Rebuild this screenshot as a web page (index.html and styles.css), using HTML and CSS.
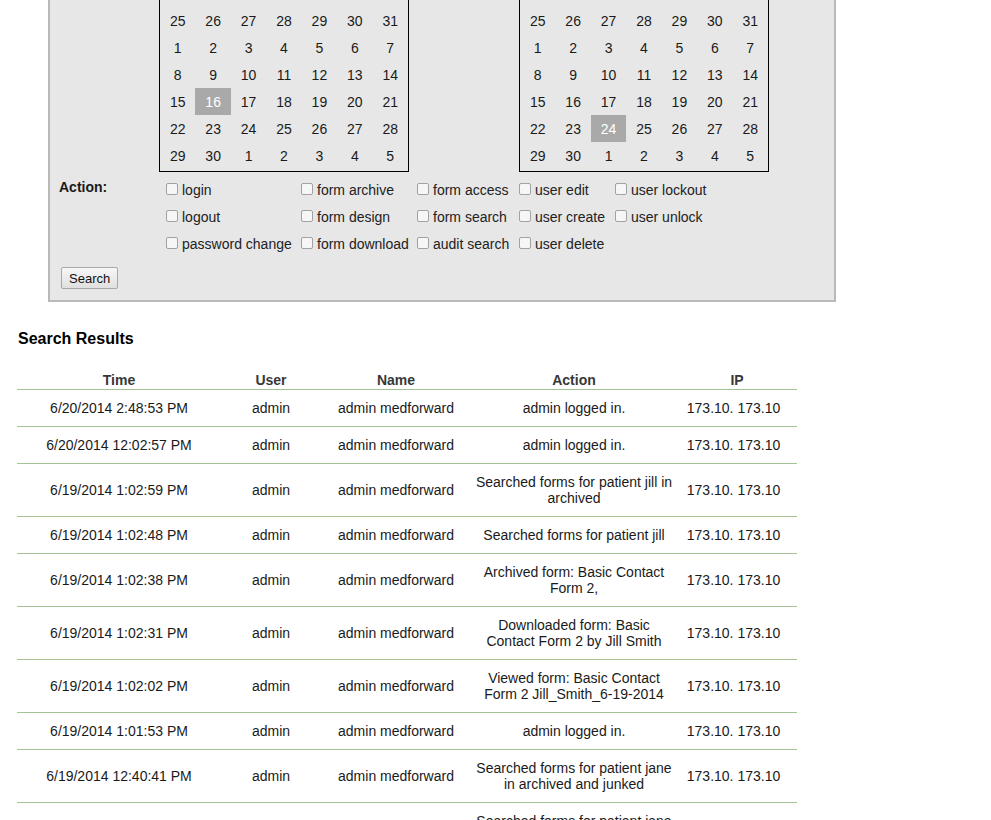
FILE: index.html
```html
<!DOCTYPE html>
<html lang="en">
<head>
    <meta charset="UTF-8">
    <meta name="viewport" content="width=device-width, initial-scale=1.0">
    <title>Audit Search</title>
    <link rel="stylesheet" href="styles.css">
</head>
<body>
<div class="page">
    <div class="filter-panel">
        <div class="date-row">
            <div class="field-label">Date:</div>
            <table class="cal">
                <tr class="cal-title"><td>&lt;</td><td colspan="5">June 2014</td><td>&gt;</td></tr>
                <tr class="cal-days"><td>Su</td><td>Mo</td><td>Tu</td><td>We</td><td>Th</td><td>Fr</td><td>Sa</td></tr>
                <tr><td>25</td><td>26</td><td>27</td><td>28</td><td>29</td><td>30</td><td>31</td></tr>
                <tr><td>1</td><td>2</td><td>3</td><td>4</td><td>5</td><td>6</td><td>7</td></tr>
                <tr><td>8</td><td>9</td><td>10</td><td>11</td><td>12</td><td>13</td><td>14</td></tr>
                <tr><td>15</td><td class="selected">16</td><td>17</td><td>18</td><td>19</td><td>20</td><td>21</td></tr>
                <tr><td>22</td><td>23</td><td>24</td><td>25</td><td>26</td><td>27</td><td>28</td></tr>
                <tr><td>29</td><td>30</td><td>1</td><td>2</td><td>3</td><td>4</td><td>5</td></tr>
            </table>
            <div class="to-label">To:</div>
            <table class="cal">
                <tr class="cal-title"><td>&lt;</td><td colspan="5">June 2014</td><td>&gt;</td></tr>
                <tr class="cal-days"><td>Su</td><td>Mo</td><td>Tu</td><td>We</td><td>Th</td><td>Fr</td><td>Sa</td></tr>
                <tr><td>25</td><td>26</td><td>27</td><td>28</td><td>29</td><td>30</td><td>31</td></tr>
                <tr><td>1</td><td>2</td><td>3</td><td>4</td><td>5</td><td>6</td><td>7</td></tr>
                <tr><td>8</td><td>9</td><td>10</td><td>11</td><td>12</td><td>13</td><td>14</td></tr>
                <tr><td>15</td><td>16</td><td>17</td><td>18</td><td>19</td><td>20</td><td>21</td></tr>
                <tr><td>22</td><td>23</td><td class="selected">24</td><td>25</td><td>26</td><td>27</td><td>28</td></tr>
                <tr><td>29</td><td>30</td><td>1</td><td>2</td><td>3</td><td>4</td><td>5</td></tr>
            </table>
        </div>
        <div class="action-row">
            <div class="field-label action-label">Action:</div>
            <div class="action-grid">
                <label class="opt"><input type="checkbox">login</label>
                <label class="opt"><input type="checkbox">form archive</label>
                <label class="opt"><input type="checkbox">form access</label>
                <label class="opt"><input type="checkbox">user edit</label>
                <label class="opt"><input type="checkbox">user lockout</label>
                <label class="opt"><input type="checkbox">logout</label>
                <label class="opt"><input type="checkbox">form design</label>
                <label class="opt"><input type="checkbox">form search</label>
                <label class="opt"><input type="checkbox">user create</label>
                <label class="opt"><input type="checkbox">user unlock</label>
                <label class="opt"><input type="checkbox">password change</label>
                <label class="opt"><input type="checkbox">form download</label>
                <label class="opt"><input type="checkbox">audit search</label>
                <label class="opt"><input type="checkbox">user delete</label>
            </div>
        </div>
        <button class="search-btn">Search</button>
    </div>

    <h3 class="results-title">Search Results</h3>
    <table class="results">
        <colgroup>
            <col class="c-time"><col class="c-user"><col class="c-name"><col class="c-action"><col class="c-ip">
        </colgroup>
        <tr><th>Time</th><th>User</th><th>Name</th><th>Action</th><th>IP</th></tr>
        <tr><td>6/20/2014 2:48:53 PM</td><td>admin</td><td>admin medforward</td><td>admin logged in.</td><td class="ip">173.10. 173.10</td></tr>
        <tr><td>6/20/2014 12:02:57 PM</td><td>admin</td><td>admin medforward</td><td>admin logged in.</td><td class="ip">173.10. 173.10</td></tr>
        <tr><td>6/19/2014 1:02:59 PM</td><td>admin</td><td>admin medforward</td><td>Searched forms for patient jill in archived</td><td class="ip">173.10. 173.10</td></tr>
        <tr><td>6/19/2014 1:02:48 PM</td><td>admin</td><td>admin medforward</td><td>Searched forms for patient jill</td><td class="ip">173.10. 173.10</td></tr>
        <tr><td>6/19/2014 1:02:38 PM</td><td>admin</td><td>admin medforward</td><td>Archived form: Basic Contact Form 2,</td><td class="ip">173.10. 173.10</td></tr>
        <tr><td>6/19/2014 1:02:31 PM</td><td>admin</td><td>admin medforward</td><td>Downloaded form: Basic Contact Form 2 by Jill Smith</td><td class="ip">173.10. 173.10</td></tr>
        <tr><td>6/19/2014 1:02:02 PM</td><td>admin</td><td>admin medforward</td><td>Viewed form: Basic Contact Form 2 Jill_Smith_6-19-2014</td><td class="ip">173.10. 173.10</td></tr>
        <tr><td>6/19/2014 1:01:53 PM</td><td>admin</td><td>admin medforward</td><td>admin logged in.</td><td class="ip">173.10. 173.10</td></tr>
        <tr><td>6/19/2014 12:40:41 PM</td><td>admin</td><td>admin medforward</td><td>Searched forms for patient jane in archived and junked</td><td class="ip">173.10. 173.10</td></tr>
        <tr><td>6/19/2014 12:40:30 PM</td><td>admin</td><td>admin medforward</td><td>Searched forms for patient jane in archived</td><td class="ip">173.10. 173.10</td></tr>
        <tr><td>6/19/2014 12:40:12 PM</td><td>admin</td><td>admin medforward</td><td>admin logged in.</td><td class="ip">173.10. 173.10</td></tr>
    </table>
</div>
</body>
</html>
```

FILE: styles.css
```css
body {
    font-family: "Liberation Sans", Arial, sans-serif;
    font-size: 14px;
    color: #1a1a1a;
    margin: 0;
    padding: 0;
    background: #fff;
}
.page {
    padding-left: 17px;
}
.filter-panel {
    box-sizing: border-box;
    width: 788px;
    margin: -60px 0 0 31px;
    padding: 10px 9px 11px 9px;
    background: #e7e7e7;
    border: 2px solid #b9b9b9;
}
.date-row {
    display: flex;
    align-items: flex-start;
}
.field-label {
    width: 100px;
    flex-shrink: 0;
    font-weight: bold;
}
.to-label {
    width: 110px;
    flex-shrink: 0;
    padding-left: 10px;
    box-sizing: border-box;
    font-weight: bold;
}
.cal {
    width: 250px;
    border: 1px solid #000;
    border-collapse: separate;
    border-spacing: 0;
    table-layout: fixed;
    flex-shrink: 0;
}
.cal td {
    height: 27px;
    padding: 0;
    text-align: center;
}
.cal tr:last-child td {
    height: 28px;
    padding-bottom: 1px;
}
.cal .cal-title td {
    font-weight: bold;
}
.cal td.selected {
    background: #a9a9a9;
    color: #fff;
}
.action-row {
    display: flex;
    align-items: flex-start;
    margin-top: 4px;
}
.action-label {
    padding-top: 3px;
}
.action-grid {
    display: grid;
    grid-template-columns: 135px 116px 102px 96px auto;
    grid-auto-rows: 27px;
    margin-left: 7px;
}
.opt {
    display: flex;
    align-items: center;
    white-space: nowrap;
    color: #222;
}
.opt input {
    appearance: none;
    -webkit-appearance: none;
    box-sizing: border-box;
    width: 12px;
    height: 12px;
    margin: -2px 4px 0 0;
    border: 1px solid #a2a2a2;
    border-radius: 2px;
    background: #f6f6f6;
}
.search-btn {
    display: block;
    height: 22px;
    margin: 10px 0 0 2px;
    padding: 0 7px;
    font-family: "Liberation Sans", Arial, sans-serif;
    font-size: 13px;
    color: #111;
    background: linear-gradient(#f7f7f7, #e0e0e0);
    border: 1px solid #a8a8a8;
    border-radius: 2px;
}
.results-title {
    margin: 28px 0 19px 1px;
    font-size: 16px;
    line-height: 18px;
    color: #000;
}
.results {
    width: 780px;
    border-collapse: collapse;
    table-layout: fixed;
}
.c-time { width: 204px; }
.c-user { width: 100px; }
.c-name { width: 150px; }
.c-action { width: 206px; }
.c-ip { width: 120px; }
.results th {
    padding: 5px 0 1px;
    line-height: 16px;
    color: #383838;
    border-bottom: 1px solid #a2c294;
}
.results td {
    padding: 10px 3px;
    line-height: 16px;
    text-align: center;
    color: #1a1a1a;
    border-bottom: 1px solid #a2c294;
}
.results td.ip {
    padding-right: 10px;
}
```
